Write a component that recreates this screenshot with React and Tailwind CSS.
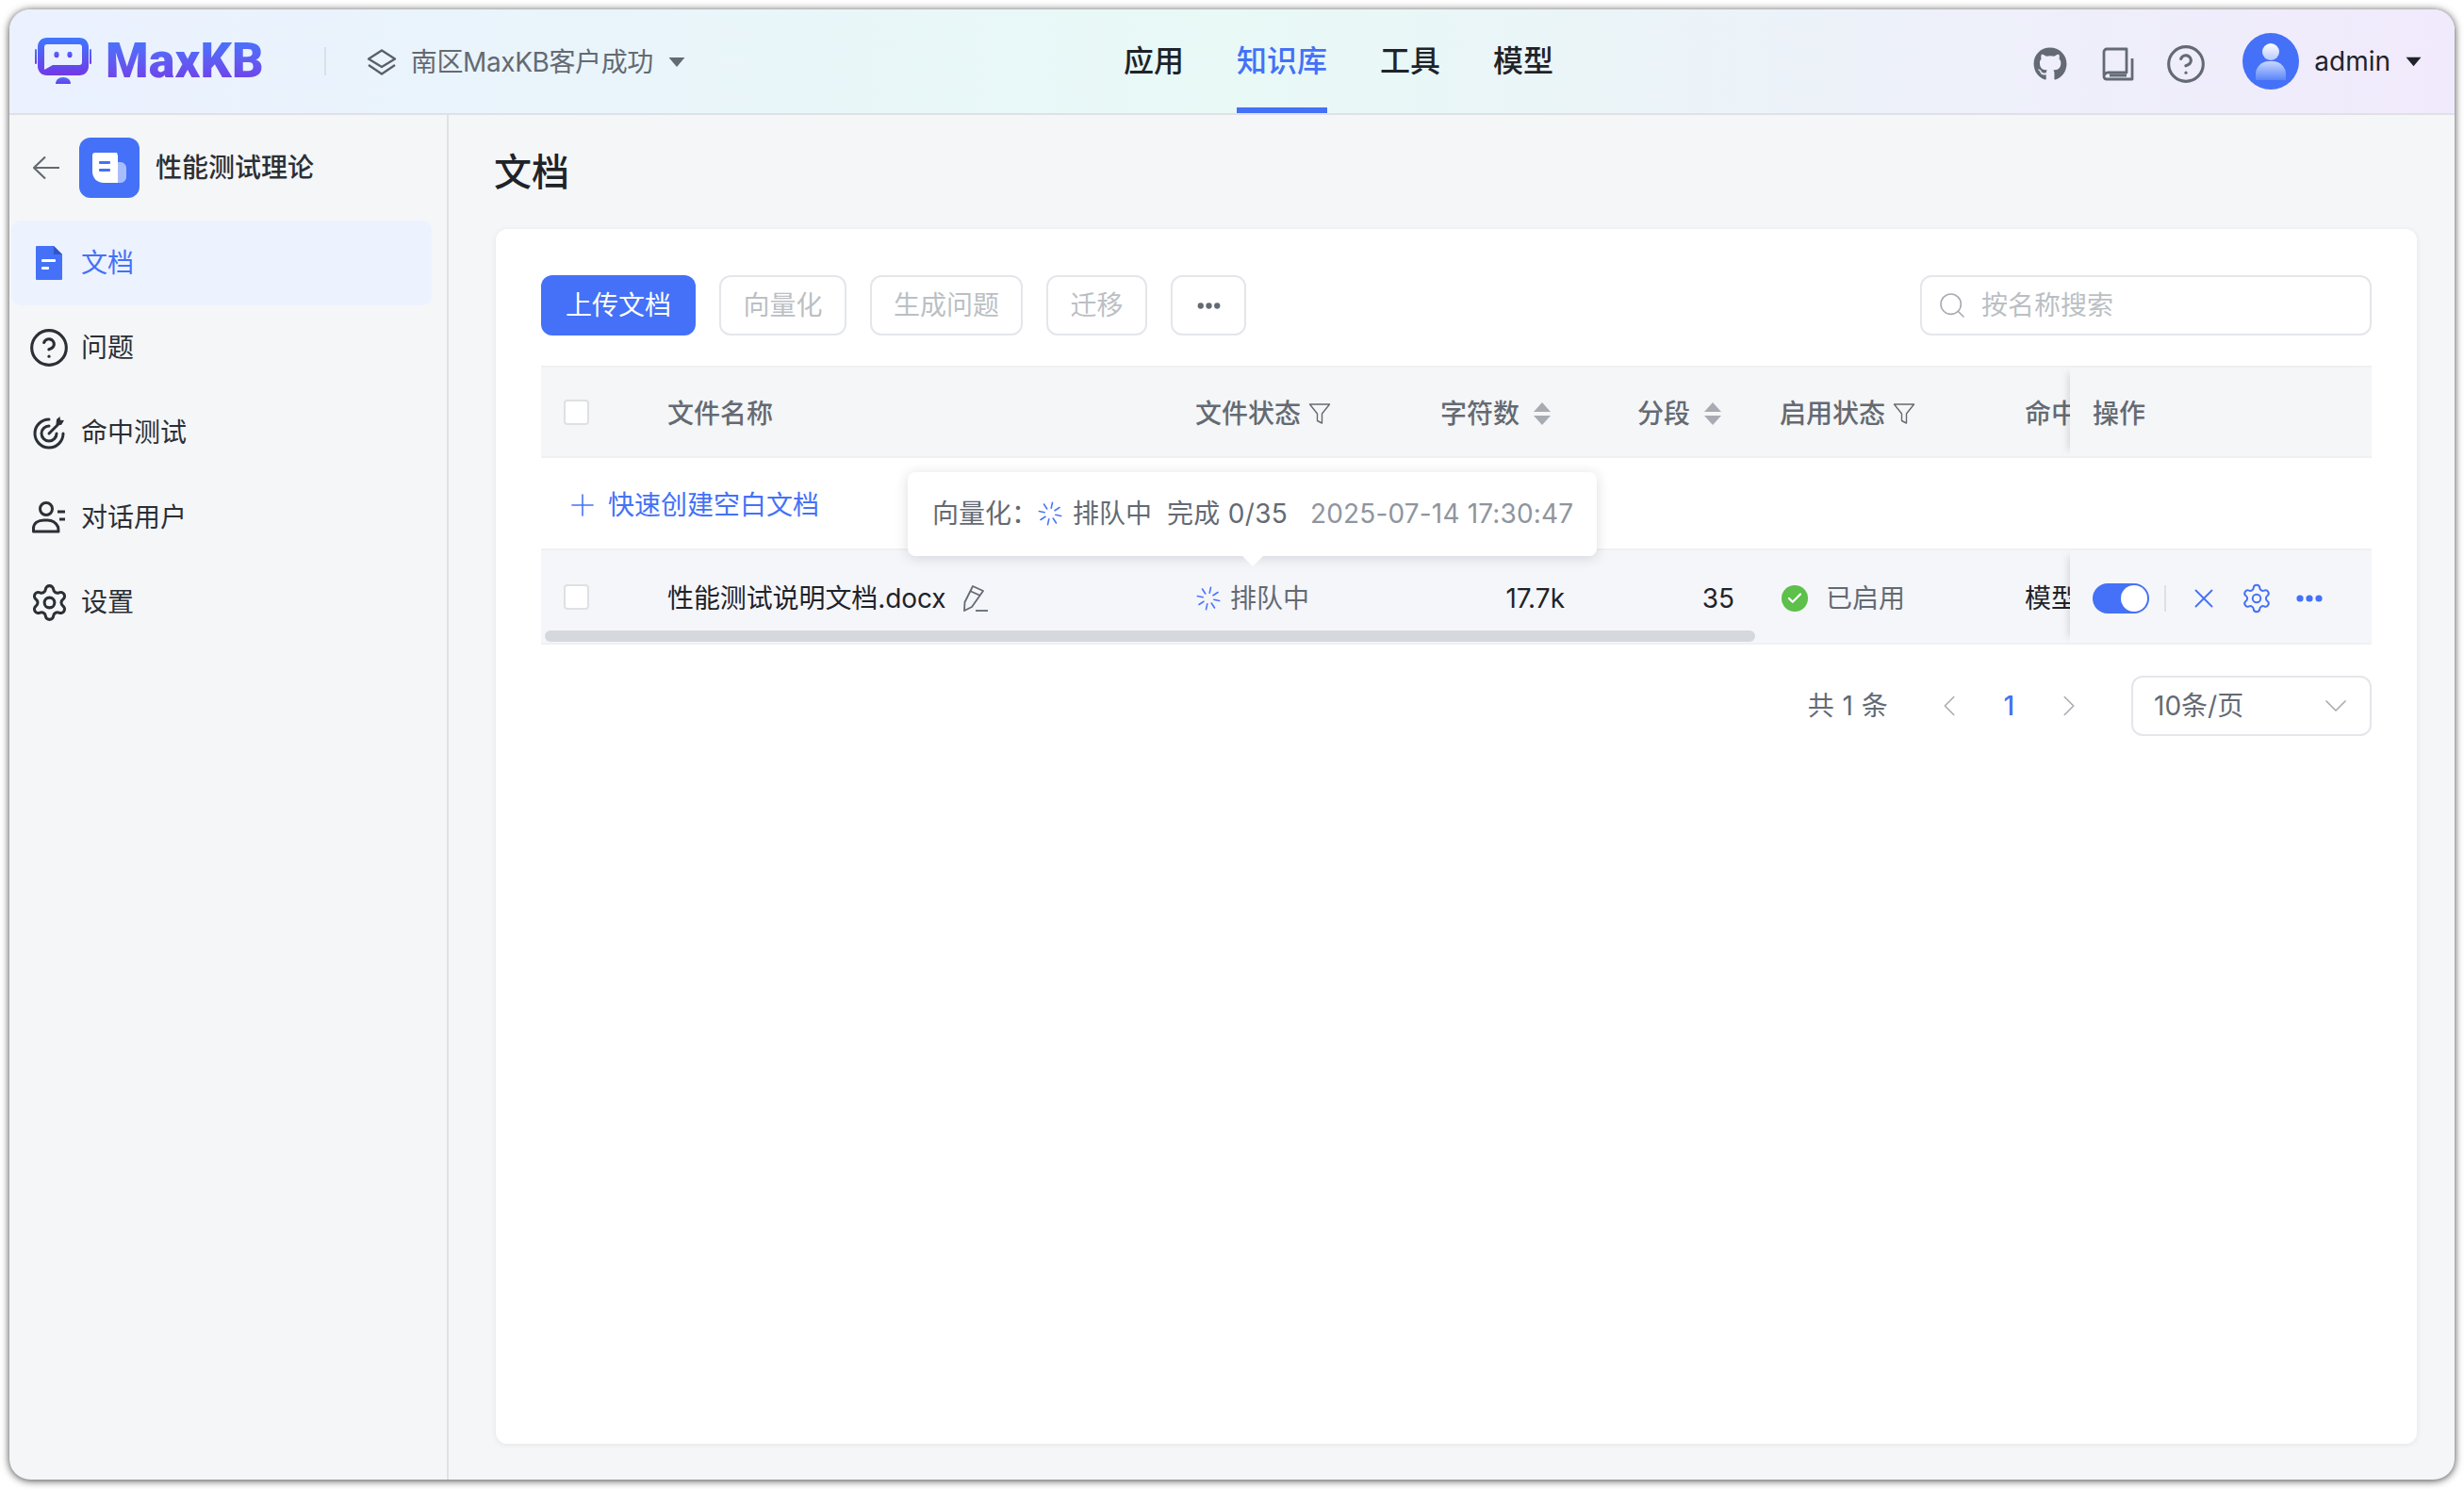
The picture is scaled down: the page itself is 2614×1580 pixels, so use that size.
import React from "react";
import { Settings, X, Plus, Search, ChevronLeft, ChevronRight, ChevronDown, Check, CircleHelp } from "lucide-react";
import { FaGithub } from "react-icons/fa";

const FONT = "font-['Inter','Noto_Sans_CJK_SC',sans-serif]";

function Caret({ className = "" }) {
  return (
    <svg viewBox="0 0 16 10" className={className} fill="currentColor">
      <path d="M0.5 0.5h15L8 9.5z" />
    </svg>
  );
}

function RobotLogo() {
  return (
    <svg viewBox="0 0 60 50" className="w-[60px] h-[50px] shrink-0">
      <defs>
        <linearGradient id="rg" x1="0" y1="0" x2="0" y2="1">
          <stop offset="0" stopColor="#3f78ff" />
          <stop offset="1" stopColor="#7238e6" />
        </linearGradient>
      </defs>
      <path fill="url(#rg)" fillRule="evenodd" d="M13 0h34c6 0 10 4 10 10v20c0 6-4 10-10 10H13C7 40 3 36 3 30V10C3 4 7 0 13 0zm0 7c-2 0-3 1-3 3v24l9-5h28c2 0 3-1 3-3V10c0-2-1-3-3-3z" />
      <rect x="0" y="12" width="2" height="16" rx="1" fill="url(#rg)" />
      <rect x="58" y="12" width="2" height="16" rx="1" fill="url(#rg)" />
      <ellipse cx="23" cy="18" rx="2.6" ry="3.2" fill="url(#rg)" />
      <ellipse cx="37" cy="18" rx="2.6" ry="3.2" fill="url(#rg)" />
      <path fill="url(#rg)" d="M22 49c0-4 3-7 8-7s8 3 8 7z" />
    </svg>
  );
}

function Spinner({ className = "" }) {
  const a = [12, 57, 102, 147, 192, 237, 282, 327];
  return (
    <svg viewBox="0 0 24 24" className={className} fill="none" stroke="#4b76f7" strokeWidth="1.5" strokeLinecap="round">
      {a.map((d) => (
        <line key={d} x1="12" y1="1" x2="12" y2="6.5" transform={`rotate(${d} 12 12)`} />
      ))}
    </svg>
  );
}

function Filter() {
  return (
    <svg viewBox="0 0 24 24" className="w-[24px] h-[24px] shrink-0" fill="none" stroke="#646a73" strokeWidth="1.4" strokeLinejoin="round">
      <path d="M1.5 2h21l-8 10v10l-5-2.5V12z" />
    </svg>
  );
}

function Sort() {
  return (
    <svg viewBox="0 0 20 26" className="w-[20px] h-[26px] shrink-0" fill="#a8abb2">
      <path d="M10 1l9 10H1z" />
      <path d="M10 25l9-10H1z" />
    </svg>
  );
}

function DocIcon() {
  return (
    <svg viewBox="0 0 28 36" className="w-[28px] h-[36px]">
      <path fill="#4471f7" d="M1 0h18l9 9v26a1 1 0 0 1-1 1H1a1 1 0 0 1-1-1V1a1 1 0 0 1 1-1z" />
      <path fill="#2f55c9" d="M19 0l9 9h-9z" />
      <rect x="6" y="14" width="15" height="3" rx="1" fill="#fff" />
      <rect x="6" y="22" width="8" height="3" rx="1" fill="#fff" />
    </svg>
  );
}

function TargetIcon() {
  return (
    <svg viewBox="0 0 36 36" className="w-[36px] h-[36px]" fill="none" stroke="#2b2f36" strokeWidth="3" strokeLinecap="round">
      <path d="M18 4a15 15 0 1 0 15 15" />
      <path d="M18 11a8 8 0 1 0 8 8" />
      <path d="M18 19L28 9" />
      <path d="M26 4l-.5 5.5L31 10l3-5-4-.2L29.5 1z" fill="#2b2f36" stroke="none" />
    </svg>
  );
}

function UserIcon() {
  return (
    <svg viewBox="0 0 36 36" className="w-[36px] h-[36px]" fill="none" stroke="#2b2f36" strokeWidth="3">
      <circle cx="15" cy="9" r="6.5" />
      <path d="M1.5 33v-3c0-6 5-9 11-9h4c5 0 9 3 11 7 .5 1 .5 5 .5 5z" strokeLinejoin="round" />
      <path d="M27 12h8M29 20h6" />
    </svg>
  );
}

function KbIcon() {
  return (
    <div className="w-[64px] h-[64px] rounded-[12px] bg-[#4471f7] flex items-center justify-center shrink-0">
      <svg viewBox="0 0 36 32" className="w-[36px] h-[32px]">
        <path fill="#a8bdfb" d="M26 10h4c3 0 6 3 6 6v10c0 3-3 6-6 6h-4z" />
        <path fill="#fff" d="M3 0h23l1 3v29H12C5 32 0 27 0 20V3a3 3 0 0 1 3-3z" />
        <rect x="7" y="9" width="12" height="3" rx="1" fill="#4471f7" />
        <rect x="7" y="17" width="12" height="3" rx="1" fill="#4471f7" />
      </svg>
    </div>
  );
}

function NavItem({ label, active }) {
  return (
    <div className={`relative h-full flex items-center text-[32px] font-medium ${active ? "text-[#4471f7]" : "text-[#1f2329]"}`}>
      <span>{label}</span>
      {active && <div className="absolute left-0 right-0 bottom-0 h-[6px] bg-[#4471f7]" />}
    </div>
  );
}

function MenuItem({ icon, label, active }) {
  return (
    <div className={`h-[90px] ml-[2px] mr-[16px] rounded-[10px] flex items-center pl-[22px] gap-[16px] text-[28px] ${active ? "bg-[#ecf2fe] text-[#4471f7]" : "text-[#2b2f36]"}`}>
      <div className="w-[36px] flex justify-center">{icon}</div>
      <span>{label}</span>
    </div>
  );
}

function OutlineBtn({ children, w }) {
  return (
    <div className={`h-[64px] ${w} border-2 border-[#e4e6ea] rounded-[12px] flex items-center justify-center text-[28px] text-[#bbbfc4]`}>
      {children}
    </div>
  );
}

function Dots({ className = "", color }) {
  return (
    <svg viewBox="0 0 28 8" className={className} fill={color}>
      <circle cx="4" cy="4" r="3.6" />
      <circle cx="14" cy="4" r="3.6" />
      <circle cx="24" cy="4" r="3.6" />
    </svg>
  );
}

function Checkbox() {
  return <div className="w-[27px] h-[27px] rounded-[4px] border-2 border-[#dee0e3] bg-white" />;
}

export default function App() {
  return (
    <div className={`w-[2614px] h-[1580px] bg-white p-[10px] ${FONT}`}>
      <div className="w-[2594px] h-[1560px] rounded-[22px] overflow-hidden flex flex-col bg-[#f5f6f7] shadow-[0_1px_8px_rgba(0,0,0,0.75)]">
        {/* header */}
        <header className="h-[112px] shrink-0 border-b-2 border-[#dfe1e6] bg-gradient-to-r from-[#ebf1ff] via-[#e8f9f6] to-[#f1eafc] flex items-center relative">
          <div className="flex items-center pl-[27px] h-full">
            <RobotLogo />
            <span className="ml-[15px] text-[52px] leading-none font-black font-['Roboto'] tracking-[0.2px] bg-gradient-to-b from-[#3f78ff] to-[#7238e6] bg-clip-text text-transparent">MaxKB</span>
            <div className="ml-[64px] w-[2px] h-[30px] bg-[#dcdfe4]" />
            <svg viewBox="0 0 32 28" className="ml-[43px] w-[32px] h-[28px] mt-[2px]" fill="none" stroke="#5b6068" strokeWidth="2.4" strokeLinejoin="round">
              <path d="M16 1.5L30 10.5 16 19 2 10.5z" />
              <path d="M2 17l14 9.5L30 17" />
            </svg>
            <span className="ml-[15px] text-[28px] text-[#646a73] tracking-[-0.4px] mt-[2px]">南区MaxKB客户成功</span>
            <Caret className="ml-[16px] w-[18px] h-[12px] text-[#646a73] mt-[2px]" />
          </div>
          <nav className="absolute left-[1182px] top-0 h-full flex gap-[56px]">
            <NavItem label="应用" />
            <NavItem label="知识库" active />
            <NavItem label="工具" />
            <NavItem label="模型" />
          </nav>
          <div className="ml-auto flex items-center pr-[35px] text-[#646a73]">
            <FaGithub className="w-[36px] h-[36px] mt-[6px]" />
            <svg viewBox="0 0 34 36" className="ml-[37px] w-[34px] h-[36px] mt-[6px]" fill="none" stroke="#646a73" strokeWidth="2.8" strokeLinejoin="round">
              <path d="M2 30V5a3 3 0 0 1 3-3h21v25H7a4.5 4.5 0 0 0-5 4.5A3 3 0 0 0 5 34h27V12" />
              <path d="M8 30h18" />
            </svg>
            <CircleHelp className="ml-[33px] w-[44px] h-[44px] mt-[6px]" strokeWidth={1.7} />
            <div className="ml-[38px] w-[60px] h-[60px] rounded-full bg-[#4471f7] relative overflow-hidden">
              <div className="absolute left-[21px] top-[11px] w-[18px] h-[18px] rounded-full bg-gradient-to-b from-[#fff] to-[#b6c8fc]" />
              <div className="absolute left-[14px] top-[30px] w-[32px] h-[20px] rounded-t-[14px] bg-gradient-to-b from-[#c9d7fd] to-[#5b83f8]" />
            </div>
            <span className="ml-[16px] text-[28px] text-[#1f2329]">admin</span>
            <Caret className="ml-[16px] w-[17px] h-[11px] text-[#1f2329]" />
          </div>
        </header>

        <div className="flex-1 flex min-h-0">
          {/* sidebar */}
          <aside className="w-[466px] shrink-0 border-r-2 border-[#dfe1e6] flex flex-col">
            <div className="h-[112px] flex items-center pl-[24px] shrink-0">
              <svg viewBox="0 0 30 26" className="w-[30px] h-[26px]" fill="none" stroke="#646a73" strokeWidth="2.2" strokeLinejoin="round">
                <path d="M29 13H2M14 1.5L2 13l12 11.5" />
              </svg>
              <div className="ml-[20px]"><KbIcon /></div>
              <span className="ml-[17px] text-[28px] font-medium text-[#2b2f36]">性能测试理论</span>
            </div>
            <MenuItem icon={<DocIcon />} label="文档" active />
            <MenuItem icon={<CircleHelp className="shrink-0 w-[44px] h-[44px] text-[#2b2f36]" strokeWidth={1.7} />} label="问题" />
            <MenuItem icon={<TargetIcon />} label="命中测试" />
            <MenuItem icon={<UserIcon />} label="对话用户" />
            <MenuItem icon={<Settings className="shrink-0 w-[43px] h-[43px] text-[#2b2f36]" strokeWidth={1.7} />} label="设置" />
          </aside>

          {/* main */}
          <main className="flex-1 min-w-0 flex flex-col pl-[50px] pr-[40px] pb-[38px]">
            <h1 className="h-[121px] shrink-0 flex items-center text-[40px] font-medium text-[#1f2329] -ml-[2px]">文档</h1>
            <div className="flex-1 bg-white rounded-[12px] shadow-[0_1px_6px_rgba(31,35,41,0.08)] px-[48px] pt-[49px]">
              {/* toolbar */}
              <div className="flex items-center justify-between">
                <div className="flex items-center gap-[25px]">
                  <div className="h-[64px] w-[164px] rounded-[12px] bg-[#4471f7] text-white text-[28px] flex items-center justify-center">上传文档</div>
                  <OutlineBtn w="w-[135px]">向量化</OutlineBtn>
                  <OutlineBtn w="w-[162px]">生成问题</OutlineBtn>
                  <OutlineBtn w="w-[107px]">迁移</OutlineBtn>
                  <div className="h-[64px] w-[80px] border-2 border-[#e4e6ea] rounded-[12px] flex items-center justify-center">
                    <Dots className="w-[25px] h-[7px]" color="#646a73" />
                  </div>
                </div>
                <div className="h-[64px] w-[479px] border-2 border-[#e4e6ea] rounded-[12px] flex items-center pl-[16px] gap-[15px] text-[28px] text-[#bbbfc4]">
                  <Search className="w-[32px] h-[32px] text-[#a8abb2]" strokeWidth={1.2} />
                  <span>按名称搜索</span>
                </div>
              </div>

              {/* table */}
              <div className="relative mt-[32px] text-[28px]">
                {/* head */}
                <div className="flex h-[98px] bg-[#f5f6f7] border-y-2 border-[#eff0f1] text-[#646a73] font-medium">
                  <div className="w-[111px] pl-[24px] flex items-center shrink-0"><Checkbox /></div>
                  <div className="w-[560px] pl-[23px] pt-[3px] flex items-center shrink-0">文件名称</div>
                  <div className="w-[260px] pl-[23px] pt-[3px] flex items-center gap-[8px] shrink-0">文件状态<Filter /></div>
                  <div className="w-[208px] pl-[23px] pt-[3px] flex items-center gap-[14px] shrink-0">字符数<Sort /></div>
                  <div className="w-[151px] pl-[24px] pt-[3px] flex items-center gap-[14px] shrink-0">分段<Sort /></div>
                  <div className="w-[261px] pl-[24px] pt-[3px] flex items-center gap-[8px] shrink-0">启用状态<Filter /></div>
                  <div className="w-[71px] pl-[23px] pt-[3px] flex items-center shrink-0 overflow-hidden whitespace-nowrap">命中测试</div>
                  <div className="flex-1 pl-[24px] pt-[3px] flex items-center bg-[#f5f6f7] shadow-[-8px_0_8px_-6px_rgba(0,0,0,0.12)] z-10">操作</div>
                </div>
                {/* quick create */}
                <div className="h-[98px] flex items-center border-b-2 border-[#eff0f1] pl-[25px] pt-[3px] text-[#4471f7]">
                  <Plus className="w-[38px] h-[38px]" strokeWidth={1} />
                  <span className="ml-[8px]">快速创建空白文档</span>
                </div>
                {/* row */}
                <div className="flex h-[100px] bg-[#f5f6fa] border-b-2 border-[#eff0f1] text-[#1f2329]">
                  <div className="w-[111px] pl-[24px] flex items-center shrink-0"><Checkbox /></div>
                  <div className="w-[560px] pl-[23px] pt-[3px] flex items-center shrink-0">
                    <span className="tracking-[-0.1px]">性能测试说明文档.docx</span>
                    <svg viewBox="0 0 26 28" className="ml-[19px] w-[26px] h-[28px]" fill="none" stroke="#646a73" strokeWidth="1.8" strokeLinejoin="round">
                      <path d="M10 1l11 5L9 23l-8 4 .5-9z" />
                      <path d="M7 6l11 5" />
                      <path d="M13 27h13" />
                    </svg>
                  </div>
                  <div className="w-[260px] pl-[24px] pt-[3px] flex items-center gap-[10px] shrink-0 text-[#646a73]"><Spinner className="w-[26px] h-[26px]" />排队中</div>
                  <div className="w-[208px] pr-[53px] pt-[3px] flex items-center justify-end shrink-0">17.7k</div>
                  <div className="w-[151px] pr-[24px] pt-[3px] flex items-center justify-end shrink-0">35</div>
                  <div className="w-[261px] pl-[26px] pt-[3px] flex items-center gap-[19px] shrink-0 text-[#646a73]">
                    <div className="w-[28px] h-[28px] rounded-full bg-[#5cc04a] flex items-center justify-center"><Check className="w-[18px] h-[18px] text-white" strokeWidth={3} /></div>
                    已启用
                  </div>
                  <div className="w-[71px] pl-[23px] pt-[3px] flex items-center shrink-0 overflow-hidden whitespace-nowrap">模型测试</div>
                  <div className="flex-1 pl-[24px] pt-[3px] flex items-center bg-[#f5f6fa] shadow-[-8px_0_8px_-6px_rgba(0,0,0,0.12)] z-10">
                    <div className="w-[60px] h-[32px] rounded-full bg-[#4471f7] flex items-center justify-end pr-[2px]"><div className="w-[28px] h-[28px] rounded-full bg-white" /></div>
                    <div className="ml-[16px] w-[2px] h-[28px] bg-[#dee0e3]" />
                    <X className="ml-[23px] w-[34px] h-[34px] text-[#4471f7]" strokeWidth={1.3} />
                    <Settings className="ml-[22px] w-[34px] h-[34px] text-[#4471f7]" strokeWidth={1.4} />
                    <Dots className="ml-[25px] w-[28px] h-[8px]" color="#4471f7" />
                  </div>
                </div>
                {/* scrollbar */}
                <div className="absolute left-[4px] bottom-[3px] w-[1284px] h-[12px] rounded-full bg-[#d5d8dd]" />

                {/* tooltip */}
                <div className="absolute left-[389px] top-[113px] z-20 w-[731px] h-[89px] bg-white rounded-[8px] shadow-[0_2px_14px_rgba(31,35,41,0.16)] flex items-center pl-[26px] pb-[2px] text-[#646a73] whitespace-nowrap">
                  <span>向量化：</span>
                  <Spinner className="w-[26px] h-[26px]" />
                  <span className="ml-[11px]">排队中</span>
                  <span className="ml-[16px] tracking-[0.3px]">完成 0/35</span>
                  <span className="ml-[24px] text-[#8f959e] tracking-[0.15px]">2025-07-14 17:30:47</span>
                  <div className="absolute left-[354px] -bottom-[11px] w-0 h-0 border-x-[12px] border-x-transparent border-t-[12px] border-t-white" />
                </div>
              </div>

              {/* pagination */}
              <div className="mt-[33px] flex items-center justify-end text-[28px] text-[#646a73]">
                <span className="tracking-[0.5px]">共 1 条</span>
                <ChevronLeft className="ml-[46px] w-[38px] h-[38px] text-[#a8abb2]" strokeWidth={1} />
                <span className="ml-[38px] font-medium text-[#4471f7]">1</span>
                <ChevronRight className="ml-[39px] w-[38px] h-[38px] text-[#a8abb2]" strokeWidth={1} />
                <div className="ml-[47px] h-[64px] w-[255px] border-2 border-[#e4e6ea] rounded-[12px] flex items-center justify-between pl-[22px] pr-[16px]">
                  <span>10条/页</span>
                  <ChevronDown className="w-[40px] h-[40px] text-[#a8abb2]" strokeWidth={1} />
                </div>
              </div>
            </div>
          </main>
        </div>
      </div>
    </div>
  );
}
